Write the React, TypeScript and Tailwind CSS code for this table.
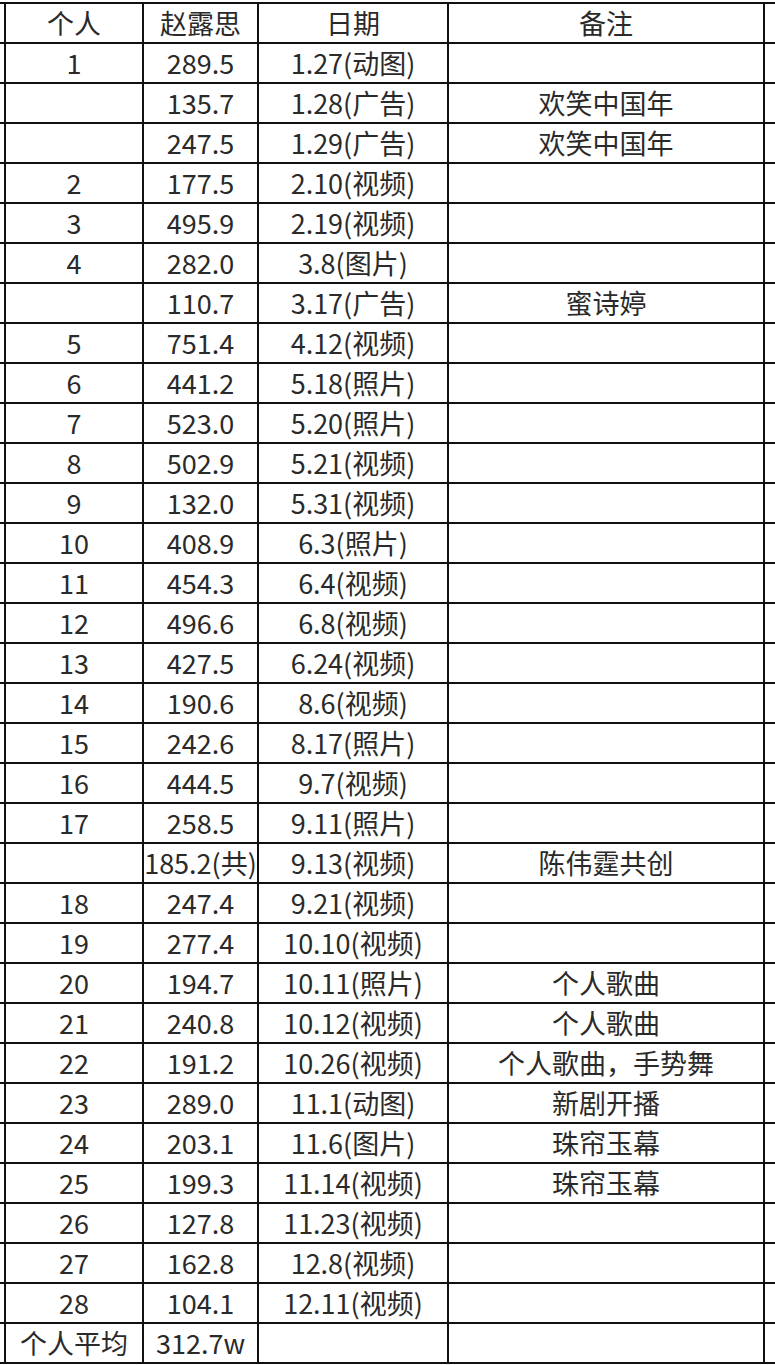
const rows: [string, string, string, string][] = [
  ['1', '289.5', '1.27(动图)', ''],
  ['', '135.7', '1.28(广告)', '欢笑中国年'],
  ['', '247.5', '1.29(广告)', '欢笑中国年'],
  ['2', '177.5', '2.10(视频)', ''],
  ['3', '495.9', '2.19(视频)', ''],
  ['4', '282.0', '3.8(图片)', ''],
  ['', '110.7', '3.17(广告)', '蜜诗婷'],
  ['5', '751.4', '4.12(视频)', ''],
  ['6', '441.2', '5.18(照片)', ''],
  ['7', '523.0', '5.20(照片)', ''],
  ['8', '502.9', '5.21(视频)', ''],
  ['9', '132.0', '5.31(视频)', ''],
  ['10', '408.9', '6.3(照片)', ''],
  ['11', '454.3', '6.4(视频)', ''],
  ['12', '496.6', '6.8(视频)', ''],
  ['13', '427.5', '6.24(视频)', ''],
  ['14', '190.6', '8.6(视频)', ''],
  ['15', '242.6', '8.17(照片)', ''],
  ['16', '444.5', '9.7(视频)', ''],
  ['17', '258.5', '9.11(照片)', ''],
  ['', '185.2(共)', '9.13(视频)', '陈伟霆共创'],
  ['18', '247.4', '9.21(视频)', ''],
  ['19', '277.4', '10.10(视频)', ''],
  ['20', '194.7', '10.11(照片)', '个人歌曲'],
  ['21', '240.8', '10.12(视频)', '个人歌曲'],
  ['22', '191.2', '10.26(视频)', '个人歌曲，手势舞'],
  ['23', '289.0', '11.1(动图)', '新剧开播'],
  ['24', '203.1', '11.6(图片)', '珠帘玉幕'],
  ['25', '199.3', '11.14(视频)', '珠帘玉幕'],
  ['26', '127.8', '11.23(视频)', ''],
  ['27', '162.8', '12.8(视频)', ''],
  ['28', '104.1', '12.11(视频)', ''],
  ['个人平均', '312.7w', '', ''],
];

function Cell({ text }: { text: string }) {
  return (
    <div className="bg-white flex items-center justify-center whitespace-nowrap overflow-visible pb-[2px]">
      {text}
    </div>
  );
}

export default function App() {
  const all: [string, string, string, string][] = [['个人', '赵露思', '日期', '备注'], ...rows];
  return (
    <div
      className="w-[775px] h-[1365px] bg-white overflow-hidden pt-[2px] text-[27px] leading-none text-[#2a2a2a]"
      style={{ fontFamily: '"Noto Sans CJK SC", "Noto Sans", sans-serif' }}
    >
      <div className="grid grid-cols-[4px_136px_113px_188px_314px_1fr] auto-rows-[38px] gap-[2px] py-[2px] bg-[#111]">
        {all.map((r, i) => (
          <div key={i} className="contents">
            <div className="bg-white" />
            <Cell text={r[0]} />
            <Cell text={r[1]} />
            <Cell text={r[2]} />
            <Cell text={r[3]} />
            <div className="bg-white" />
          </div>
        ))}
      </div>
    </div>
  );
}
